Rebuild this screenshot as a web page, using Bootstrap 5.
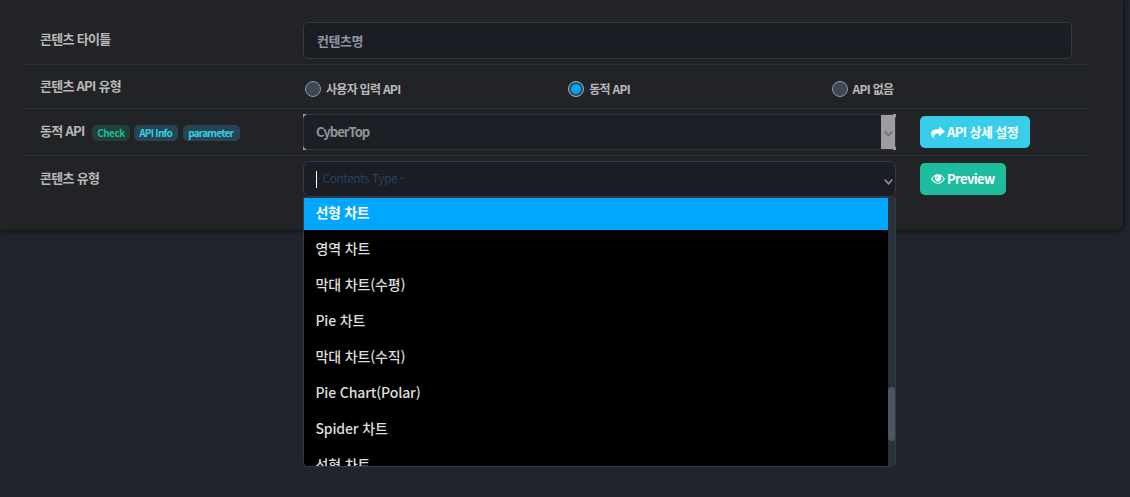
<!DOCTYPE html>
<html lang="ko" data-bs-theme="dark">
<head>
<meta charset="utf-8">
<meta name="viewport" content="width=device-width, initial-scale=1">
<title>콘텐츠 설정</title>
<link href="https://cdn.jsdelivr.net/npm/bootstrap@5.3.0/dist/css/bootstrap.min.css" rel="stylesheet">
<style>
body{background:#21242c;font-family:"Noto Sans CJK KR",sans-serif;font-size:13px;font-weight:700;color:#b8b8b9;height:497px;overflow:hidden}
.panel{width:1123px;height:230px;background:#222327;border-radius:0 0 7px 0;box-shadow:1px 1px 3px 1px #15161a;padding:16px 36px 0 25px}
.form-line{border-bottom:1px solid #2b323a;line-height:20px}
.form-line.title-line{height:49px}
.form-line.type-line{height:44px}
.form-line.api-line{height:47px}
.form-line.chart-line{height:60px;border-bottom:0}
.label-cell{padding:12px 0 0 15px;letter-spacing:-.7px}
.title-line .label-cell{padding-top:13px}
.type-line .label-cell{padding-top:11px;letter-spacing:-.75px}
.field-cell{padding:6px 15px 0 12.5px}
.api-line .field-cell,.chart-line .field-cell{padding-top:5px}
.tags{margin:4px 0 0 7px;gap:4px}
.tag{font-size:10px;line-height:16px;height:16px;border-radius:5px;padding:0 5.5px;letter-spacing:-.5px}
.tag-green{background:#214039;color:#1cbc9c;width:38px}
.tag-cyan{background:#264451;color:#38cde9}
.tag-info{width:44px;letter-spacing:-.75px}
.tag-param{width:57px;letter-spacing:-.75px;margin-left:1px}
.field{height:37px;background:#1a1d24;border:1px solid #373a40;border-radius:5px;padding:0 13px;line-height:35px;letter-spacing:-.5px}
.title-line .field{color:#8f96a3}
.radio-item{width:263.3px;flex:none;font-size:12px;letter-spacing:-.72px;padding-left:2px;height:34px}
.radio-item span{padding-top:2px}
.form-check-input.dot{width:16px;height:16px;margin:1px 5px 0 0;background:#3e4854;border:1px solid #8c98a3;float:none}
.form-check-input.dot:checked{background:#00a7ff;border-color:#a3adb8;box-shadow:inset 0 0 0 2px #34424f}
.picker{width:593px;height:36px}
.picker .field{height:36px;padding:0 2px 0 12px;line-height:34px}
.picker-locked{background:#9d9d9f}
.picker-locked .field{background:#1d1f26;border-color:#313338;color:#939496;padding-right:0;letter-spacing:-.95px}
.arrow-box{width:14px;height:34px;background:#9d9d9f;padding:14px 0 0 3px}
.picker .field.open{border-radius:7px}
.hint{color:#2b4059;font-weight:400;font-size:12px;letter-spacing:-.5px;margin-left:-1px;margin-top:-2px}
.caret{width:1px;height:17px;background:#fff}
.action{height:32px;border:0;border-radius:5px;color:#fff;font-size:13px;font-weight:700;line-height:20px;padding:0 11px;letter-spacing:-.6px;margin-left:24px;margin-top:2px}
.action svg{margin-right:2px;flex:none}
.action span{white-space:nowrap}
.action-cyan{background:#38cde8;width:110px}
.action-green{background:#1cbc9c;width:86px}
.options{position:absolute;top:36px;left:0;width:593px;height:270px;border:1px solid #373a40;border-top-color:#30363e;border-radius:0 0 5px 5px;background:#000;overflow:hidden;z-index:3}
.option{height:36px;line-height:37px;padding-left:11.4px;font-size:14px;font-weight:500;letter-spacing:-.13px;color:#dedede}
.option.first{height:32px;line-height:29px;background:#00a7ff;color:#fff;font-weight:700;letter-spacing:-.3px}
.track{width:7px;background:#29313a;padding-top:189px}
.thumb{height:54px;border-radius:4px;background:#4c5663}
</style>
</head>
<body>
<main class="panel">
  <div class="form-line title-line d-flex">
    <div class="col-3 label-cell">콘텐츠 타이틀</div>
    <div class="col-9 field-cell"><div class="field">컨텐츠명</div></div>
  </div>
  <div class="form-line type-line d-flex">
    <div class="col-3 label-cell">콘텐츠 API 유형</div>
    <div class="col-9 field-cell d-flex">
      <label class="radio-item d-flex align-items-center"><input class="form-check-input dot" type="radio" name="api"><span>사용자 입력 API</span></label>
      <label class="radio-item d-flex align-items-center"><input class="form-check-input dot" type="radio" name="api" checked><span>동적 API</span></label>
      <label class="radio-item d-flex align-items-center"><input class="form-check-input dot" type="radio" name="api"><span>API 없음</span></label>
    </div>
  </div>
  <div class="form-line api-line d-flex">
    <div class="col-3 label-cell d-flex align-items-start">동적 API
      <div class="tags d-flex"><span class="tag tag-green">Check</span><span class="tag tag-cyan tag-info">API Info</span><span class="tag tag-cyan tag-param">parameter</span></div>
    </div>
    <div class="col-9 field-cell d-flex">
      <div class="picker picker-locked"><div class="field d-flex justify-content-between"><span>CyberTop</span>
        <div class="arrow-box"><svg class="d-block" width="9" height="9" viewBox="0 0 9 9" fill="none" stroke="#727477" stroke-width="1.8"><path d="M.7 2.5 4.5 6.4 8.3 2.5"/></svg></div></div></div>
      <button class="action action-cyan d-flex align-items-center"><svg width="14" height="13" viewBox="0 0 14 13" fill="#fff"><path d="M8 .5 14 5.5 8 10.3V7.5C4.6 7.2 2.5 8.2 2.8 12.5 1 11 .2 9.3.2 7.5.3 4.4 3.2 3.2 8 3.2Z"/></svg><span>API 상세 설정</span></button>
    </div>
  </div>
  <div class="form-line chart-line d-flex">
    <div class="col-3 label-cell">콘텐츠 유형</div>
    <div class="col-9 field-cell d-flex">
      <div class="picker position-relative">
        <div class="field open d-flex justify-content-between align-items-center">
          <div class="d-flex align-items-center"><i class="caret"></i><span class="hint">- Contents Type -</span></div>
          <svg class="mt-1" width="9" height="9" viewBox="0 0 9 9" fill="none" stroke="#929499" stroke-width="1.6"><path d="M.7 2.5 4.5 6.7 8.3 2.5"/></svg>
        </div>
        <div class="options d-flex">
          <div class="flex-fill">
            <div class="option first">선형 차트</div>
            <div class="option">영역 차트</div>
            <div class="option">막대 차트(수평)</div>
            <div class="option">Pie 차트</div>
            <div class="option">막대 차트(수직)</div>
            <div class="option">Pie Chart(Polar)</div>
            <div class="option">Spider 차트</div>
            <div class="option">선형 차트</div>
          </div>
          <div class="track"><div class="thumb"></div></div>
        </div>
      </div>
      <button class="action action-green d-flex align-items-center"><svg width="14" height="12" viewBox="0 0 14 12"><path fill="#fff" fill-rule="evenodd" d="M0 6Q3 1.2 7 1.2T14 6Q11 10.8 7 10.8T0 6ZM1.3 6Q3.7 9.7 7 9.7T12.7 6Q11.8 4.3 10 3.1 11.2 7.9 7 8.7 2.8 7.9 4 3.1 2.2 4.3 1.3 6Z"/><circle cx="7" cy="5.3" r="2.6" fill="#fff"/><path d="M5.4 5.3Q5.4 3.6 7 3.6" fill="none" stroke="#1cbc9c" stroke-width=".8"/></svg><span>Preview</span></button>
    </div>
  </div>
</main>
<script src="https://cdn.jsdelivr.net/npm/bootstrap@5.3.0/dist/js/bootstrap.bundle.min.js"></script>
</body>
</html>
